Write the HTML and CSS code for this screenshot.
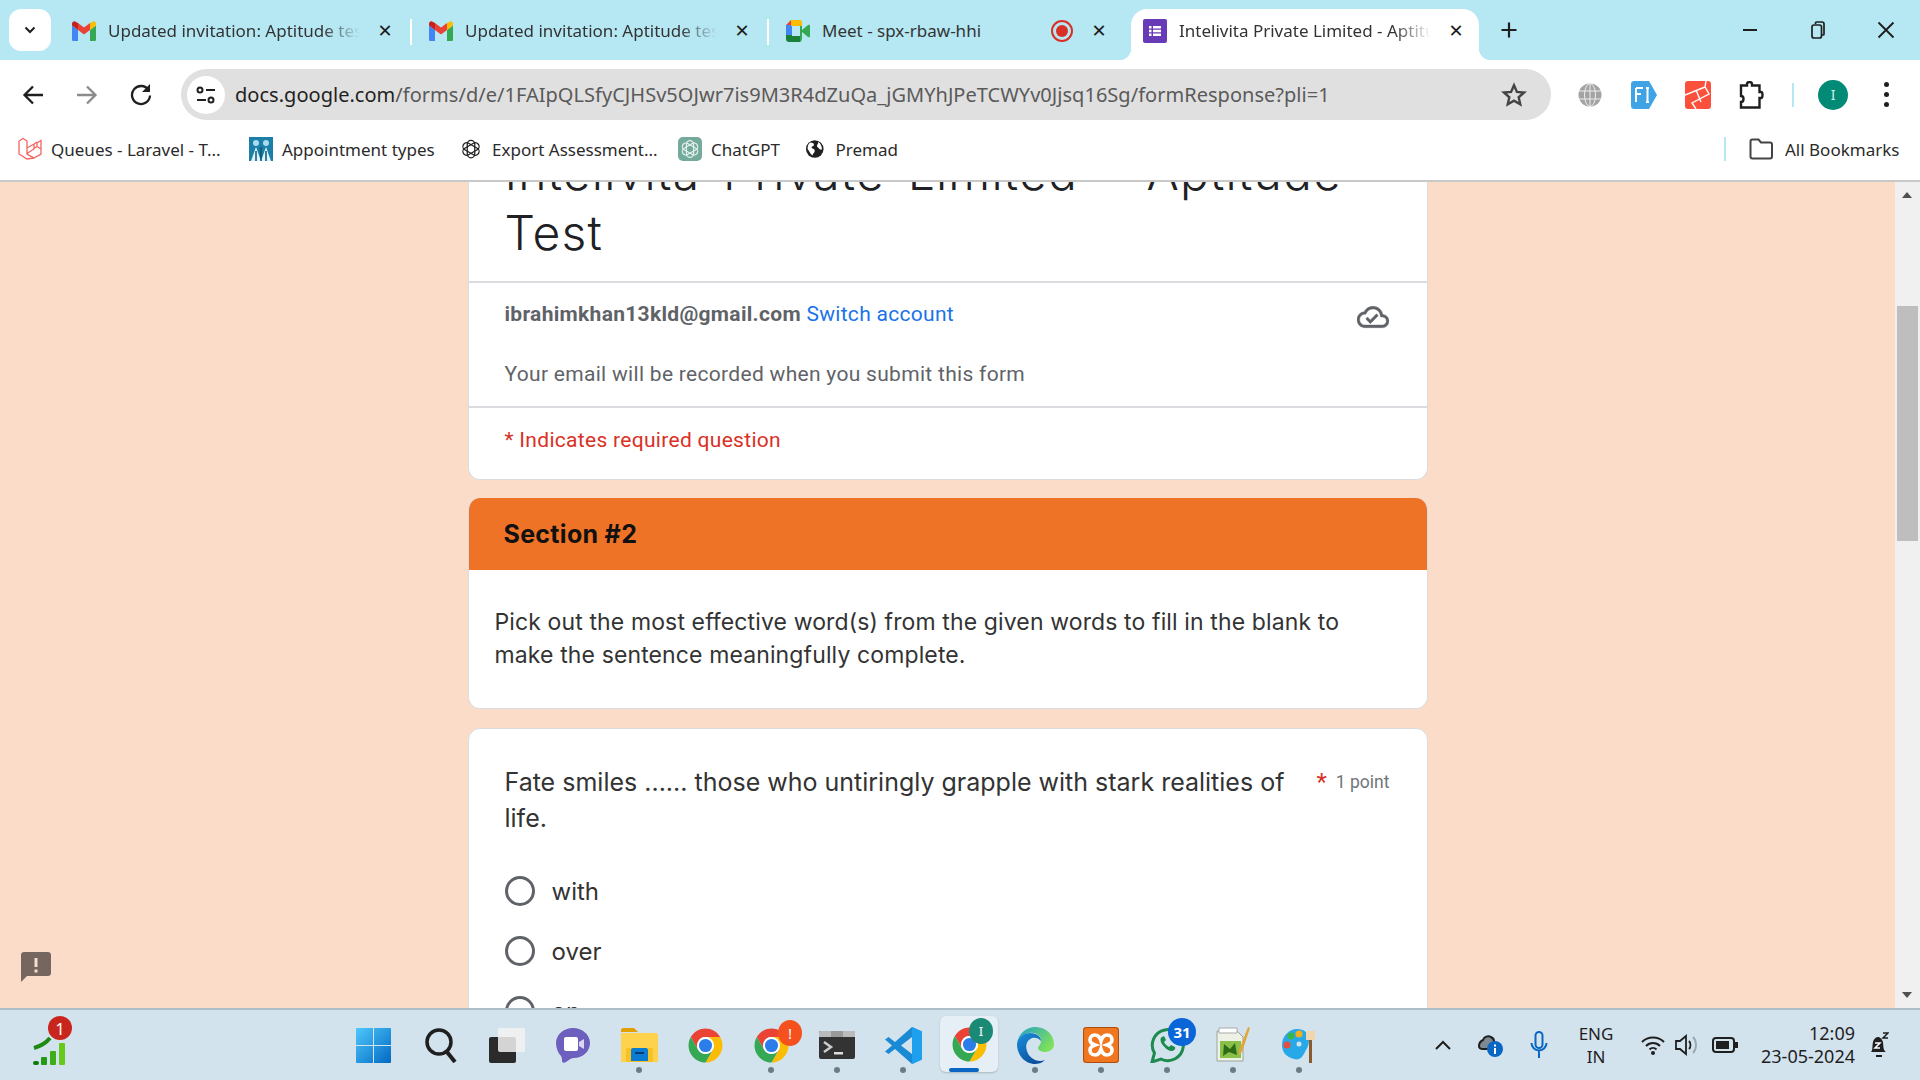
FILE: index.html
```html
<!DOCTYPE html>
<html lang="en">
<head>
  <meta charset="UTF-8">
  <title>Intelivita Private Limited - Aptitude Test</title>
  <link rel="stylesheet" href="styles.css">
</head>
<body>
  <svg class="sprite" width="0" height="0">
    <symbol id="gmail" viewBox="0 0 24 20">
      <path d="M1.6 20H6V9L0 4.5V18.4C0 19.3.7 20 1.6 20z" fill="#4285f4"/>
      <path d="M18 20h4.4c.9 0 1.6-.7 1.6-1.600V4.500L18 9z" fill="#34a853"/>
      <path d="M18 2v7l6-4.500V2.800C24 .8 21.700-.4 20 .9z" fill="#fbbc04"/>
      <path d="M6 9V2l6 4.500L18 2v7l-6 4.500z" fill="#ea4335"/>
      <path d="M0 2.800v1.700L6 9V2L4 .9C2.300-.4 0 .8 0 2.800z" fill="#c5221f"/>
    </symbol>
    <symbol id="chrome" viewBox="0 0 48 48">
      <path d="M4.950 13A22 22 0 0 1 43.050 13H24A11 11 0 0 0 14.470 29.500z" fill="#ea4335"/>
      <path d="M43.050 13A22 22 0 0 1 24 46L33.530 29.500A11 11 0 0 0 24 13z" fill="#fbbc04"/>
      <path d="M24 46A22 22 0 0 1 4.950 13L14.470 29.500A11 11 0 0 0 33.530 29.500z" fill="#34a853"/>
      <circle cx="24" cy="24" r="11" fill="#fff"/>
      <circle cx="24" cy="24" r="8.500" fill="#2b7de9"/>
    </symbol>
    <symbol id="openai" viewBox="0 0 24 24">
      <g fill="none" stroke="currentColor" stroke-width="1.500">
        <rect x="7.500" y="1.500" width="9" height="21" rx="4.500"/>
        <rect x="7.500" y="1.500" width="9" height="21" rx="4.500" transform="rotate(60 12 12)"/>
        <rect x="7.500" y="1.500" width="9" height="21" rx="4.500" transform="rotate(120 12 12)"/>
      </g>
    </symbol>
  </svg>

  <div class="tabstrip">
    <div class="tab-search"><svg width="14" height="14" viewBox="0 0 14 14"><path d="M2.500 4.500 7 9l4.500-4.500" fill="none" stroke="#1f1f1f" stroke-width="2"/></svg></div>
    <div class="tab">
      <svg class="favicon" width="24" height="20"><use href="#gmail"/></svg>
      <span class="tab-title tab-fade">Updated invitation: Aptitude test</span>
      <span class="tab-close">✕</span>
    </div>
    <div class="tab">
      <svg class="favicon" width="24" height="20"><use href="#gmail"/></svg>
      <span class="tab-title tab-fade">Updated invitation: Aptitude test</span>
      <span class="tab-close">✕</span>
    </div>
    <div class="tab tab-last">
      <svg class="favicon" width="24" height="22" viewBox="0 0 24 22">
        <path d="M0 5 5 0h9v6H6v5H0z" fill="#ea4335"/>
        <path d="M0 5h6v12H0z" fill="#4285f4"/>
        <path d="M0 15h6v1h8v6H3c-1.700 0-3-1.300-3-3z" fill="#188038"/>
        <path d="M5 0h9c1.100 0 2 .9 2 2v6l-2 3V6H5z" fill="#fbbc04"/>
        <path d="M14 6h2v4l6-5c.8-.6 2-.1 2 1v10c0 1.100-1.200 1.600-2 1l-6-5v6c0 2.200-1 4-2 4z" fill="#34a853"/>
      </svg>
      <span class="tab-title">Meet - spx-rbaw-hhi</span>
      <svg class="rec" width="24" height="24" viewBox="0 0 24 24"><circle cx="12" cy="12" r="10" fill="none" stroke="#d93025" stroke-width="2"/><circle cx="12" cy="12" r="6" fill="#d93025"/></svg>
      <span class="tab-close">✕</span>
    </div>
    <div class="tab tab-active">
      <svg class="favicon" width="24" height="24" viewBox="0 0 24 24">
        <rect width="24" height="24" rx="2" fill="#673ab7"/>
        <path d="M6 7h2.500v2.400H6zM10 7h8v2.400h-8zM6 10.800h2.500v2.400H6zM10 10.800h8v2.400h-8zM6 14.600h2.500V17H6zM10 14.600h8V17h-8z" fill="#fff"/>
      </svg>
      <span class="tab-title tab-fade">Intelivita Private Limited - Aptitude Test</span>
      <span class="tab-close">✕</span>
    </div>
    <div class="tab-new"><svg width="18" height="18" viewBox="0 0 18 18"><path d="M9 1.500v15M1.500 9h15" stroke="#1f1f1f" stroke-width="2.200"/></svg></div>
    <div class="win-controls">
      <div class="win-btn"><svg width="14" height="14" viewBox="0 0 14 14"><path d="M0 7h14" stroke="#1f1f1f" stroke-width="2"/></svg></div>
      <div class="win-btn"><svg width="14" height="18" viewBox="0 0 14 18"><path d="M4.500 3V2c0-.6.4-1 1-1H11c1 0 2 1 2 2v10c0 .6-.4 1-1 1h-1" fill="none" stroke="#1f1f1f" stroke-width="1.700"/><rect x="1" y="4" width="9.500" height="13" rx="2" fill="none" stroke="#1f1f1f" stroke-width="1.700"/></svg></div>
      <div class="win-btn"><svg width="18" height="18" viewBox="0 0 18 18"><path d="m1.500 1.500 15 15M16.500 1.500l-15 15" stroke="#1f1f1f" stroke-width="1.900"/></svg></div>
    </div>
  </div>

  <div class="toolbar">
    <div class="nav-btn"><svg width="22" height="20" viewBox="0 0 22 20"><path d="M11 1.500 2.500 10l8.500 8.500M3 10h18" fill="none" stroke="#1f1f1f" stroke-width="2.300"/></svg></div>
    <div class="nav-btn"><svg width="22" height="20" viewBox="0 0 22 20"><path d="M11 1.500 19.500 10 11 18.500M19 10H1" fill="none" stroke="#8b8b8b" stroke-width="2.300"/></svg></div>
    <div class="nav-btn"><svg width="22" height="24" viewBox="0 0 22 24"><path d="M18.500 7A9 9 0 1 0 20 12.500" fill="none" stroke="#1f1f1f" stroke-width="2.300"/><path d="M20 1v8h-8z" fill="#1f1f1f"/></svg></div>
    <div class="omnibox">
      <div class="site-info"><svg width="22" height="20" viewBox="0 0 22 20"><g fill="none" stroke="#1f1f1f" stroke-width="2"><circle cx="5" cy="5" r="2.500"/><path d="M11 5h9M2 15h9"/><circle cx="16" cy="15" r="2.500"/></g></svg></div>
      <span class="url"><span class="url-host">docs.google.com</span>/forms/d/e/1FAIpQLSfyCJHSv5OJwr7is9M3R4dZuQa_jGMYhJPeTCWYv0Jjsq16Sg/formResponse?pli=1</span>
      <svg class="star" width="26" height="26" viewBox="0 0 24 24"><path d="m12 3 2.700 6.100 6.600.6-5 4.400 1.500 6.500L12 17.200l-5.800 3.400 1.500-6.500-5-4.400 6.600-.6z" fill="none" stroke="#444" stroke-width="2.200"/></svg>
    </div>
    <div class="ext-btn ext-first"><svg width="24" height="24" viewBox="0 0 24 24"><circle cx="12" cy="12" r="11.500" fill="#a3a3a3"/><g fill="none" stroke="#eee" stroke-width="1"><ellipse cx="12" cy="12" rx="5.500" ry="11.500"/><path d="M12 .5v23M1 8h22M1 16h22"/></g></svg></div>
    <div class="ext-btn"><svg width="26" height="28" viewBox="0 0 26 28"><path d="M3 0h15l8 14-8 14H3c-1.700 0-3-1.300-3-3V3c0-1.700 1.300-3 3-3z" fill="#3fa3e6"/><path d="M5 7h7M5 7v14M5 13h5M15 7h3M15 21h3M16.500 7v14" fill="none" stroke="#fff" stroke-width="2"/></svg></div>
    <div class="ext-btn"><svg width="26" height="28" viewBox="0 0 26 28"><rect width="26" height="28" rx="3" fill="#fb503b"/><path d="m0 14 20-8 4 7L7 22l4 6M11 9l5 12M21 0l-1 6" fill="none" stroke="#fff" stroke-width="1.400"/></svg></div>
    <div class="ext-btn"><svg width="26" height="28" viewBox="0 0 26 28"><path d="M10 4V2.500C10 1 11 .5 12.500.5S15 1 15 2.500V4h7.500v6.500H24c1 0 1.500 1.500 1.500 3s-.5 3-1.500 3h-1.500V26H4v-5.500c1.500 0 2.500-1.200 2.500-3s-1-3-2.500-3V4z" transform="translate(-2 .5)" fill="none" stroke="#1f1f1f" stroke-width="2.400"/></svg></div>
    <div class="bar-sep toolbar-sep"></div>
    <div class="avatar">I</div>
    <div class="menu-dots"><i></i><i></i><i></i></div>
  </div>

  <div class="bookmarks">
    <div class="bm bm-1">
      <svg width="24" height="24" viewBox="0 0 24 24"><path d="M1 4l4-2.500L9 4v13l7 4 7-4v-5l-4-2.500-3 2 3-2V6l4-2.500L23 8v4M1 4v13l8 5 7-1M9 11l7-4v5l-7 4.500M16 7l3-2" fill="none" stroke="#f4645f" stroke-width="1.300"/></svg>
      <span>Queues - Laravel - T...</span>
    </div>
    <div class="bm bm-2">
      <svg width="24" height="24" viewBox="0 0 24 24"><rect width="24" height="24" fill="#1b7fa8"/><circle cx="7" cy="6" r="3" fill="#a9dcef"/><circle cx="17" cy="6" r="3" fill="#a9dcef"/><path d="M2 24 7 10l5 14zM12 24l5-14 5 14z" fill="#dff3fa"/><path d="M12 10v14M7 14v10M17 14v10" stroke="#0d5677" stroke-width="1.500"/></svg>
      <span>Appointment types</span>
    </div>
    <div class="bm bm-3">
      <svg class="oa-dark" width="20" height="20"><use href="#openai"/></svg>
      <span>Export Assessment...</span>
    </div>
    <div class="bm bm-4">
      <svg class="oa-green" width="24" height="24" viewBox="0 0 24 24"><rect width="24" height="24" rx="5" fill="#74aa9c"/><use href="#openai" x="2.500" y="2.500" width="19" height="19"/></svg>
      <span>ChatGPT</span>
    </div>
    <div class="bm bm-5">
      <svg width="22" height="22" viewBox="0 0 22 22"><circle cx="11" cy="11" r="11" fill="#1f1f1f"/><path d="M5 3c3 0 5 1 5 3s-3 1-3 3 4 1 4 4-2 3-3 6C5 17 4 13 2 11 2 7 3 5 5 3zM15 2c3 2 5 5 5 9-1 2-3 0-4-1s-3-2-2-4 2-2 1-4z" fill="#fff"/></svg>
      <span>Premad</span>
    </div>
    <div class="bar-sep bookmarks-sep"></div>
    <div class="bm bm-all">
      <svg width="24" height="22" viewBox="0 0 24 22"><path d="M1.500 3.500c0-1 .7-2 2-2h6l2.500 3h9c1.300 0 2 1 2 2v12c0 1-.7 2-2 2h-17.500c-1.300 0-2-1-2-2z" fill="none" stroke="#444" stroke-width="2"/></svg>
      <span>All Bookmarks</span>
    </div>
  </div>

  <div class="viewport">
    <main class="form-scroll">
      <div class="form-col">
        <section class="card head-card">
          <h1 class="form-title">Intelivita Private Limited - Aptitude Test</h1>
          <div class="account-row">
            <div class="account-line">
              <span class="account-mail">ibrahimkhan13kld@gmail.com</span>
              <a class="account-switch">Switch account</a>
              <svg class="cloud" width="32" height="32" viewBox="0 0 24 24"><path d="M19.350 10.040C18.670 6.590 15.640 4 12 4 9.110 4 6.600 5.640 5.350 8.040 2.340 8.360 0 10.910 0 14c0 3.310 2.690 6 6 6h13c2.760 0 5-2.240 5-5 0-2.640-2.050-4.780-4.650-4.960zM19 18H6c-2.210 0-4-1.790-4-4 0-2.050 1.530-3.760 3.560-3.970l1.070-.11.5-.95C8.080 7.140 9.940 6 12 6c2.620 0 4.880 1.860 5.390 4.430l.3 1.500 1.530.11c1.560.1 2.780 1.410 2.780 2.960 0 1.650-1.350 3-3 3zm-9-3.820l-2.090-2.090L6.500 13.500 10 17l6.010-6.010-1.410-1.410z" fill="#5f6368" stroke="#5f6368" stroke-width=".3"/></svg>
            </div>
            <p class="account-note">Your email will be recorded when you submit this form</p>
          </div>
          <p class="required-note">* Indicates required question</p>
        </section>

        <section class="card section-card">
          <h2 class="section-head">Section #2</h2>
          <p class="section-desc">Pick out the most effective word(s) from the given words to fill in the blank to make the sentence meaningfully complete.</p>
        </section>

        <section class="card question-card">
          <div class="question-head">
            <p class="question-text">Fate smiles ...... those who untiringly grapple with stark realities of life.</p>
            <span class="question-star">*</span>
            <span class="question-points">1 point</span>
          </div>
          <div class="option"><span class="radio"></span><span>with</span></div>
          <div class="option"><span class="radio"></span><span>over</span></div>
          <div class="option"><span class="radio"></span><span>on</span></div>
        </section>
      </div>
    </main>
    <svg class="feedback" width="30" height="30" viewBox="0 0 30 30"><path d="M3 0h24c1.700 0 3 1.300 3 3v18c0 1.700-1.300 3-3 3H6l-6 6V3c0-1.700 1.300-3 3-3z" fill="#75665f"/><path d="M13.500 6h3v9h-3zM13.500 17.500h3v3h-3z" fill="#fadcc9"/></svg>
    <div class="scrollbar">
      <span class="arrow-up"></span>
      <div class="scroll-thumb"></div>
      <span class="arrow-down"></span>
    </div>
  </div>

  <footer class="taskbar">
    <div class="tb-signal">
      <svg width="34" height="30" viewBox="0 0 34 30"><path d="M2 13C9 11 14 8 18 3" fill="none" stroke="#1f8a13" stroke-width="4"/><rect x="1" y="26" width="6" height="4" rx="2" fill="#0f7a0f"/><rect x="9" y="22" width="6" height="8" rx="1" fill="#259a16"/><rect x="18" y="16" width="6" height="14" rx="1" fill="#3fae18"/><rect x="27" y="8" width="6" height="22" rx="1" fill="#67c91c"/></svg>
      <span class="badge badge-red">1</span>
    </div>

    <div class="tb-apps">
      <div class="tb-app tb-win"><svg width="35" height="35" viewBox="0 0 35 35"><defs><linearGradient id="wg" x1="0" y1="0" x2="1" y2="1"><stop offset="0" stop-color="#4fc8fb"/><stop offset="1" stop-color="#0169c4"/></linearGradient></defs><path d="M1 0h16v17H0V1c0-.5.500-1 1-1zM18 0h16c.5 0 1 .5 1 1v16H18zM0 18h17v17H1c-.5 0-1-.5-1-1zM18 18h17v16c0 .5-.5 1-1 1H18z" fill="url(#wg)"/></svg></div>
      <div class="tb-app"><svg width="33" height="35" viewBox="0 0 33 35"><circle cx="14" cy="14" r="12" fill="none" stroke="#1f1f1f" stroke-width="3.500"/><path d="m22 24 8 10" stroke="#1f1f1f" stroke-width="4"/></svg></div>
      <div class="tb-app"><svg width="36" height="35" viewBox="0 0 36 35"><rect y="9" width="27" height="26" rx="2" fill="#2b2b2b"/><rect x="9" width="27" height="24" rx="2" fill="#f2f2f2" fill-opacity=".85"/></svg></div>
      <div class="tb-app"><svg width="34" height="35" viewBox="0 0 34 35"><path d="M17 0c9.400 0 17 6.700 17 15s-7 15-16 15c-3 0-5 2-8 4-1.500 1-4 1-4-1 0-2 0-3-1-5C2 25 0 20 0 15 0 6.700 7.600 0 17 0z" fill="#6d5fbe"/><rect x="8" y="9" width="14" height="14" rx="2" fill="#fff"/><path d="m23 14 5-3v10l-5-3z" fill="#dcd8f2"/></svg></div>
      <div class="tb-app tb-running"><svg width="37" height="34" viewBox="0 0 37 34"><path d="M0 2c0-1 1-2 2-2h11l4 4H0z" fill="#e2a000"/><path d="M0 5h35c1 0 2 1 2 2v27H0z" fill="#ffd24d"/><rect x="5" y="20" width="27" height="14" rx="1" fill="#f2b100" fill-opacity=".5"/><path d="M10 22c0-1 1-2 2-2h13c1 0 2 1 2 2v11H10z" fill="#0a7cd3"/><path d="M14 24h9v2h-9z" fill="#073b6b"/></svg></div>
      <div class="tb-app"><svg width="37" height="37"><use href="#chrome"/></svg></div>
      <div class="tb-app tb-running"><svg width="37" height="37"><use href="#chrome"/></svg><span class="badge badge-orange">!</span></div>
      <div class="tb-app tb-running"><svg width="36" height="28" viewBox="0 0 36 28"><rect width="36" height="28" rx="2" fill="#333"/><path d="M0 2c0-1 1-2 2-2h34v6H0z" fill="#bbb"/><rect x="12" width="12" height="6" fill="#999"/><path d="m5 11 7 5-7 5" fill="none" stroke="#ccc" stroke-width="2.500"/><path d="M15 21h9v2.500h-9z" fill="#ddd"/></svg></div>
      <div class="tb-app tb-running"><svg width="37" height="37" viewBox="0 0 37 37"><path d="M27 0 10 15 3.500 10 0 12.500l7 6-7 6L3.500 27 10 22l17 15 10-4.500v-28zM27 10v17l-11-8.500z" fill="#1a8ad4"/><path d="M27 0l10 4.500v28L27 37z" fill="#1da1ef"/></svg></div>
      <div class="tb-app tb-active"><svg width="37" height="37"><use href="#chrome"/></svg><span class="badge badge-teal">I</span></div>
      <div class="tb-app tb-running"><svg width="37" height="37" viewBox="0 0 37 37"><defs><linearGradient id="eg" x1="0" y1="0" x2="1" y2=".6"><stop offset="0" stop-color="#1e9fc9"/><stop offset="1" stop-color="#7fe05c"/></linearGradient><linearGradient id="eb" x1="0" y1="0" x2=".6" y2="1"><stop offset="0" stop-color="#1a90dc"/><stop offset="1" stop-color="#0b4f9e"/></linearGradient></defs><path d="M18.500 0C30 0 37 9 37 17c0 5-4 8-9 8-4 0-7-2-7-4s3-3 3-7c0-6-6-9-12-8C6 7 1 12 0 17 1 7 9 0 18.500 0z" fill="url(#eg)"/><path d="M0 17C1 10 7 6 13 6c7 0 11 4 11 8-2-3-6-4-9-3-5 2-7 7-5 13 2 7 10 12 18 9-3 3-7 4-10 4C8 37 0 28 0 17z" fill="url(#eb)"/></svg></div>
      <div class="tb-app tb-running"><svg width="36" height="36" viewBox="0 0 36 36"><rect width="36" height="36" rx="3" fill="#f0761f"/><rect x=".5" y=".5" width="35" height="35" rx="3" fill="none" stroke="#a84f10"/><path d="M12 8c-4 0-5 3-5 5s2 4 5 5c-3 1-5 3-5 5s1 5 5 5 5-3 6-6c1 3 2 6 6 6s5-3 5-5-2-4-5-5c3-1 5-3 5-5s-1-5-5-5-5 3-6 6c-1-3-2-6-6-6z" fill="none" stroke="#fff" stroke-width="3.600"/></svg></div>
      <div class="tb-app tb-running"><svg width="35" height="36" viewBox="0 0 35 36"><path d="M2 35l2.500-9A15.500 15.500 0 1 1 11 32z" fill="none" stroke="#1d8a4e" stroke-width="3"/><path d="M12 10c-2 1-2 4 0 7s6 7 9 7 5-2 4-4l-4-2-2 2c-2-1-4-3-5-5l2-2-2-4z" fill="#1d8a4e"/></svg><span class="badge badge-blue">31</span></div>
      <div class="tb-app tb-running"><svg width="34" height="36" viewBox="0 0 34 36"><path d="M1 4h20l6 6v24H1z" fill="#eef2e6" stroke="#9aa39a"/><path d="M4 14h21v17H4z" fill="#8ac04a"/><path d="M8 17l6 5 5-6 2 12-8-3-6 4z" fill="#2d6b17"/><path d="M32 0l2 1-8 24-3 3 0-5z" fill="#e2a63a"/><path d="M3 1h18v5H3z" fill="#fff" stroke="#aaa"/></svg></div>
      <div class="tb-app tb-running"><svg width="34" height="36" viewBox="0 0 34 36"><path d="M15 2c7 0 12 4 12 10 0 7-2 9-4 13-2 4-5 9-11 7C4 30 0 25 0 18 0 9 7 2 15 2z" fill="#27a8e8"/><circle cx="17" cy="7" r="3.500" fill="#f2b01e"/><circle cx="9" cy="9" r="3.500" fill="#3bb54a"/><circle cx="5" cy="18" r="3.500" fill="#e74c3c"/><circle cx="17" cy="17" r="2.500" fill="#d3e3ed"/><path d="M27 13h3v23h-3z" fill="#8a5a2b"/><path d="M24 4h9v9h-9z" fill="#f0d6ae"/></svg></div>
    </div>

    <div class="tray">
      <div class="tray-cell tray-chev"><svg width="16" height="10" viewBox="0 0 16 10"><path d="m1 9 7-7 7 7" fill="none" stroke="#1f1f1f" stroke-width="2"/></svg></div>
      <div class="tray-cell tray-cloud"><svg width="26" height="24" viewBox="0 0 26 24"><path d="M2 13c0-3 2-5 4-6 1-3 5-5 8-3 2 1 3 2 3 4v8H6c-3 0-4-1-4-3z" fill="#7d8a91" stroke="#1f1f1f" stroke-width="2"/><circle cx="18" cy="16" r="8" fill="#0a66c2"/><path d="M17 15h2v6h-2zM17 11.500h2v2h-2z" fill="#fff"/></svg></div>
      <div class="tray-cell tray-mic"><svg width="18" height="28" viewBox="0 0 18 28"><rect x="5.500" y="1" width="7" height="16" rx="3.500" fill="none" stroke="#0a66c2" stroke-width="2"/><path d="M1.500 12a7.500 7.500 0 0 0 15 0M9 20v7" fill="none" stroke="#0a66c2" stroke-width="2"/></svg></div>
      <div class="tray-cell tray-lang"><span>ENG</span><span>IN</span></div>
      <div class="tray-cell tray-wifi"><svg width="24" height="20" viewBox="0 0 24 20"><path d="M1 7c6-6 16-6 22 0M5 11c4-4 10-4 14 0M8.500 14.500c2-2 5-2 7 0" fill="none" stroke="#1f1f1f" stroke-width="2"/><circle cx="12" cy="18" r="2" fill="#1f1f1f"/></svg></div>
      <div class="tray-cell tray-vol"><svg width="24" height="22" viewBox="0 0 24 22"><path d="M1 7h4l6-5v18l-6-5H1z" fill="none" stroke="#1f1f1f" stroke-width="1.800"/><path d="M14 7c2 2 2 6 0 8" fill="none" stroke="#1f1f1f" stroke-width="1.800"/><path d="M18 3c4 4 4 12 0 16" fill="none" stroke="#9aa6ad" stroke-width="1.800"/></svg></div>
      <div class="tray-cell tray-batt"><svg width="26" height="16" viewBox="0 0 26 16"><rect x="1" y="1" width="21" height="14" rx="3" fill="none" stroke="#1f1f1f" stroke-width="2"/><rect x="4" y="4" width="13" height="8" fill="#1f1f1f"/><rect x="23" y="5" width="3" height="6" fill="#1f1f1f"/></svg></div>
      <div class="tray-cell tray-clock"><span>12:09</span><span>23-05-2024</span></div>
      <div class="tray-cell tray-bell"><svg width="20" height="26" viewBox="0 0 20 26"><path d="M2 20c2-2 1-5 2-10 .5-3 3-5 5-5s4 2 5 5c.5 4 0 8 3 10z" fill="#1f1f1f"/><path d="M7 23h6v2H7z" fill="#1f1f1f"/><path d="M6 11h5l-5 5h5" fill="none" stroke="#fff" stroke-width="1.500"/><path d="M14 1h5l-5 5h5" fill="none" stroke="#1f1f1f" stroke-width="1.500"/></svg></div>
    </div>
  </footer>
</body>
</html>
```

FILE: styles.css
```css
* {
  box-sizing: border-box;
}

html, body {
  margin: 0;
  height: 100%;
}

body {
  width: 1920px;
  height: 1080px;
  overflow: hidden;
  display: flex;
  flex-direction: column;
  font-family: "Noto Sans", sans-serif;
  color: #1f1f1f;
  background: #fff;
}

.sprite {
  position: absolute;
}

/* tab strip */
.tabstrip {
  height: 60px;
  flex: none;
  display: flex;
  background: #b6e8f4;
}

.tab-search {
  width: 42px;
  height: 42px;
  margin: 9px 9px 0;
  background: #fff;
  border-radius: 12px;
  display: flex;
  align-items: center;
  justify-content: center;
}

.tab {
  position: relative;
  width: 357px;
  height: 51px;
  margin-top: 9px;
  padding: 0 22px 8px 12px;
  display: flex;
  align-items: center;
  font-size: 17px;
}

.tab::after {
  content: "";
  position: absolute;
  right: 5px;
  top: 10px;
  height: 26px;
  width: 2px;
  background: #fff;
}

.tab-last::after,
.tab-active::after {
  display: none;
}

.favicon {
  flex: none;
  margin-right: 12px;
}

.tab-title {
  flex: 1;
  min-width: 0;
  white-space: nowrap;
  overflow: hidden;
  color: #333;
}

.tab-fade {
  -webkit-mask-image: linear-gradient(90deg, #000 85%, transparent 100%);
  mask-image: linear-gradient(90deg, #000 85%, transparent 100%);
}

.rec {
  flex: none;
}

.tab-close {
  flex: none;
  width: 20px;
  margin-left: 15px;
  font-family: "DejaVu Sans", sans-serif;
  font-size: 18px;
  font-weight: bold;
  line-height: 20px;
  text-align: center;
  color: #1f1f1f;
}

.tab-active {
  width: 348px;
  padding-right: 13px;
  background: #fff;
  border-radius: 16px 16px 0 0;
}

.tab-active::before {
  content: "";
  position: absolute;
  left: -12px;
  right: -12px;
  bottom: 0;
  height: 12px;
  background:
    radial-gradient(circle at 0 0, #b6e8f4 12px, #fff 12.500px) left / 12px 12px no-repeat,
    radial-gradient(circle at 100% 0, #b6e8f4 12px, #fff 12.500px) right / 12px 12px no-repeat;
}

.tab-new {
  width: 18px;
  height: 42px;
  margin: 9px 0 0 21px;
  display: flex;
  align-items: center;
}

.win-controls {
  margin-left: auto;
  display: flex;
}

.win-btn {
  width: 68px;
  height: 60px;
  display: flex;
  align-items: center;
  justify-content: center;
}

/* toolbar */
.toolbar {
  height: 60px;
  flex: none;
  padding-top: 9px;
  display: flex;
  align-items: center;
  background: #fff;
  border-radius: 12px 12px 0 0;
  position: relative;
}

.nav-btn {
  width: 54px;
  display: flex;
  justify-content: center;
}

.nav-btn:first-child {
  margin-left: 6px;
}

.omnibox {
  width: 1370px;
  height: 51px;
  margin-left: 13px;
  padding: 0 24px 0 6px;
  display: flex;
  align-items: center;
  background: #e0e0e0;
  border-radius: 26px;
}

.site-info {
  width: 38px;
  height: 38px;
  margin-right: 10px;
  border-radius: 50%;
  background: #fff;
  display: flex;
  align-items: center;
  justify-content: center;
}

.url {
  font-size: 20px;
  letter-spacing: .025px;
  color: #5a5a5a;
  white-space: nowrap;
}

.url-host {
  color: #1f1f1f;
}

.star {
  margin-left: auto;
}

.ext-btn {
  width: 54px;
  display: flex;
  justify-content: center;
}

.ext-first {
  margin-left: 12px;
}

.bar-sep {
  width: 2px;
  background: #b6e8f4;
}

.toolbar-sep {
  height: 24px;
  margin-left: 13px;
}

.avatar {
  width: 30px;
  height: 30px;
  margin-left: 24px;
  border-radius: 50%;
  background: #018a76;
  color: #d5efe9;
  font-size: 14px;
  line-height: 30px;
  text-align: center;
}

.menu-dots {
  margin-left: 36px;
  display: flex;
  flex-direction: column;
  gap: 5px;
}

.menu-dots i {
  width: 5px;
  height: 5px;
  border-radius: 50%;
  background: #1f1f1f;
}

/* bookmarks bar */
.bookmarks {
  height: 62px;
  flex: none;
  padding: 0 0 2px 18px;
  display: flex;
  align-items: center;
  background: #fff;
  border-bottom: 2px solid #c9c9c9;
  font-size: 17px;
  color: #2b2b2b;
}

.bm {
  display: flex;
  align-items: center;
  gap: 9px;
  white-space: nowrap;
  flex: none;
}

.bm-1 { width: 231px; }
.bm-2 { width: 212px; }
.bm-3 { width: 217px; gap: 11px; }
.bm-4 { width: 128px; }
.bm-5 { width: 92px; gap: 12px; }

.oa-dark { color: #1f1f1f; }
.oa-green { color: #e4f1ed; }

.bookmarks-sep {
  height: 24px;
  margin-left: 826px;
}

.bm-all {
  margin-left: 23px;
  gap: 12px;
}

/* page area */
.viewport {
  position: relative;
  flex: 1;
  min-height: 0;
  display: flex;
  overflow: hidden;
  background: #fadcc9;
}

.form-scroll {
  flex: 1;
  min-width: 0;
  display: flex;
  justify-content: center;
}

.form-col {
  width: 960px;
  margin-top: -37px;
  display: flex;
  flex-direction: column;
  gap: 18px;
  flex: none;
}

.card {
  background: #fff;
  border: 1px solid #dadce0;
  border-radius: 12px;
  flex: none;
}

.head-card {
  height: 335px;
  border-radius: 0 0 12px 12px;
  border-top: 0;
}

.form-title {
  height: 138px;
  margin: -2px 0 0;
  padding: 0 34px 0 36px;
  font-family: Inter, sans-serif;
  font-size: 48px;
  font-weight: 300;
  letter-spacing: 1.200px;
  word-spacing: 8px;
  line-height: 60px;
  color: #202124;
}

.account-row {
  height: 127px;
  padding: 0 36px;
  border-top: 2px solid #dadce0;
  border-bottom: 2px solid #dadce0;
  font-family: Roboto, sans-serif;
  font-size: 21px;
  letter-spacing: .3px;
}

.account-line {
  position: relative;
  height: 36px;
  margin-top: 13px;
  line-height: 36px;
}

.account-mail {
  font-weight: 700;
  color: #5f6368;
}

.account-switch {
  color: #1a73e8;
}

.cloud {
  position: absolute;
  right: 2px;
  top: 5px;
}

.account-note {
  margin: 24px 0 0;
  line-height: 36px;
  color: #5f6368;
}

.required-note {
  margin: 14px 0 0;
  padding: 0 36px;
  font-family: Roboto, sans-serif;
  font-size: 21px;
  letter-spacing: .3px;
  line-height: 36px;
  color: #d93025;
}

.section-card {
  height: 211px;
  overflow: hidden;
  border-top: 0;
}

.section-head {
  height: 72px;
  margin: 0 -1px;
  padding-left: 36px;
  background: #ee7326;
  font-family: Inter, sans-serif;
  font-size: 25px;
  font-weight: 700;
  letter-spacing: .3px;
  line-height: 72px;
  color: #111;
}

.section-desc {
  margin: 36px 0 0;
  padding: 0 60px 0 26px;
  font-family: Inter, sans-serif;
  font-size: 23px;
  letter-spacing: .12px;
  line-height: 33px;
  color: #333;
}

.question-card {
  height: 400px;
  margin-top: 1px;
  padding: 35px 36px 0;
}

.question-head {
  display: flex;
  align-items: flex-start;
  margin-bottom: 25px;
}

.question-text {
  width: 790px;
  margin: 0;
  flex: none;
  font-family: Inter, sans-serif;
  font-size: 25px;
  line-height: 36px;
  color: #333;
}

.question-star {
  margin-left: 22px;
  font-family: Roboto, sans-serif;
  font-size: 24px;
  line-height: 36px;
  color: #d93025;
}

.question-points {
  margin-left: 9px;
  font-family: Roboto, sans-serif;
  font-size: 17.500px;
  line-height: 36px;
  white-space: nowrap;
  color: #70757a;
}

.option {
  height: 60px;
  display: flex;
  align-items: center;
  gap: 17px;
  font-family: Inter, sans-serif;
  font-size: 24px;
  color: #333;
}

.radio {
  width: 30px;
  height: 30px;
  border: 3px solid #5f6368;
  border-radius: 50%;
}

.feedback {
  position: absolute;
  left: 21px;
  bottom: 26px;
}

.scrollbar {
  width: 25px;
  flex: none;
  position: relative;
  background: #f0f0f0;
  padding-top: 124px;
  display: flex;
  justify-content: center;
}

.scroll-thumb {
  width: 21px;
  height: 235px;
  background: #bebebe;
}

.arrow-up,
.arrow-down {
  position: absolute;
  left: 7px;
  width: 0;
  height: 0;
  border-left: 5.500px solid transparent;
  border-right: 5.500px solid transparent;
}

.arrow-up {
  top: 10px;
  border-bottom: 6px solid #505050;
}

.arrow-down {
  bottom: 10px;
  border-top: 6px solid #505050;
}

/* windows taskbar */
.taskbar {
  height: 72px;
  flex: none;
  display: flex;
  align-items: center;
  background: #d3e3ed;
  border-top: 2px solid #aebdc6;
}

.tb-signal {
  position: relative;
  width: 34px;
  margin: 10px 0 0 32px;
  display: flex;
}

.tb-apps {
  margin-left: 276px;
  display: flex;
}

.tb-app {
  position: relative;
  width: 66px;
  height: 70px;
  display: flex;
  align-items: center;
  justify-content: center;
}

.tb-win svg {
  margin-right: 4px;
}

.tb-running::after {
  content: "";
  position: absolute;
  left: 30px;
  bottom: 7px;
  width: 6px;
  height: 6px;
  border-radius: 50%;
  background: #6f7b82;
}

.tb-active {
  width: 58px;
  height: 56px;
  margin: 6px 4px 0;
  background: #e6eff5;
  border-radius: 6px;
  box-shadow: 0 1px 2px rgba(0, 0, 0, .2);
}

.tb-active::after {
  content: "";
  position: absolute;
  left: 9px;
  bottom: 0;
  width: 30px;
  height: 4px;
  border-radius: 2px;
  background: #0a66c2;
}

.badge {
  position: absolute;
  display: flex;
  align-items: center;
  justify-content: center;
  border-radius: 50%;
  color: #fff;
  font-size: 17px;
}

.badge-red {
  right: -6px;
  top: -19px;
  width: 24px;
  height: 24px;
  background: #c8261c;
}

.badge-orange {
  left: 40px;
  top: 10px;
  width: 24px;
  height: 26px;
  background: #f4511e;
  font-size: 15px;
}

.badge-teal {
  left: 29px;
  top: 2px;
  width: 24px;
  height: 26px;
  background: #1a8a76;
  font-size: 13px;
}

.badge-blue {
  left: 34px;
  top: 8px;
  width: 28px;
  height: 28px;
  background: #0a66d8;
  font-size: 15px;
  font-weight: 700;
}

.tray {
  margin-left: 88px;
  display: flex;
  align-items: center;
  height: 70px;
  font-family: "Noto Sans", sans-serif;
  font-size: 17px;
}

.tray-cell {
  display: flex;
  align-items: center;
  justify-content: center;
  flex: none;
}

.tray-chev { width: 46px; }
.tray-cloud { width: 48px; }
.tray-mic { width: 50px; }

.tray-lang {
  width: 64px;
  flex-direction: column;
  line-height: 23px;
}

.tray-wifi { width: 34px; margin-left: 8px; }
.tray-vol { width: 34px; }
.tray-batt { width: 38px; margin-left: 2px; }

.tray-clock {
  width: 111px;
  flex-direction: column;
  align-items: flex-end;
  font-size: 18px;
  line-height: 23px;
}

.tray-bell {
  width: 30px;
  margin-left: 9px;
}
```
